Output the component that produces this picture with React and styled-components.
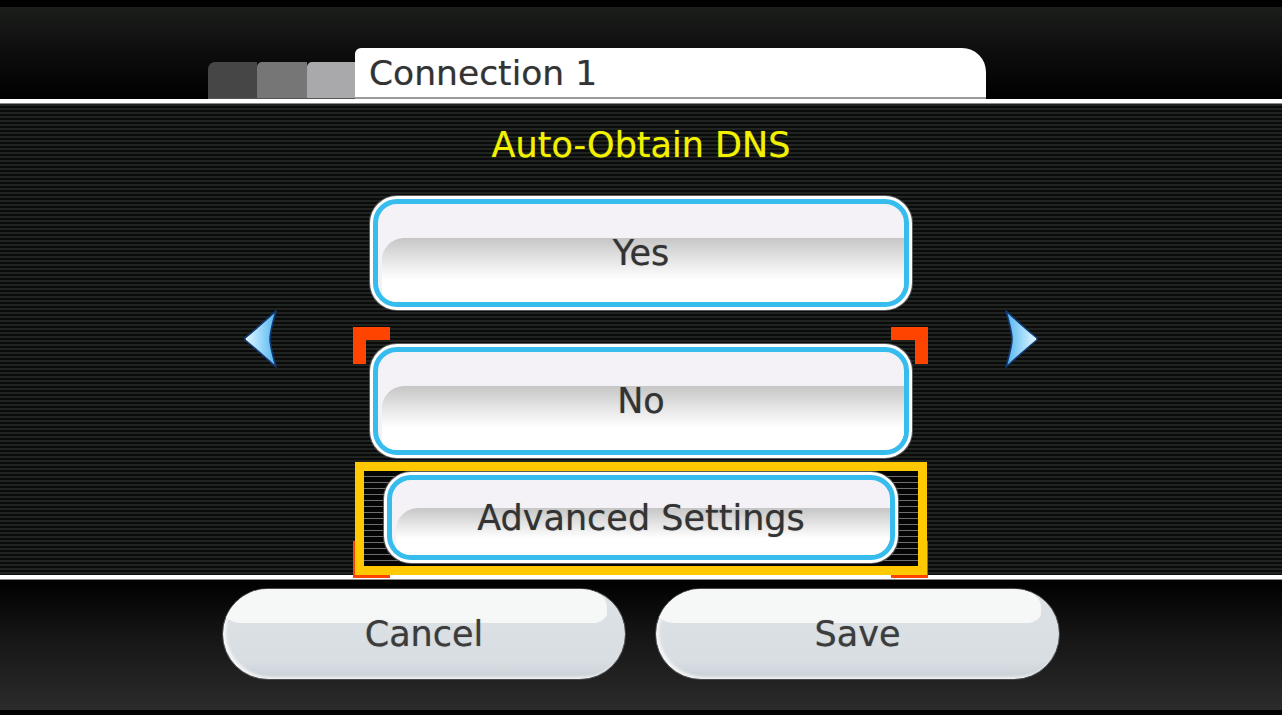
import React from "react";
import styled, { createGlobalStyle } from "styled-components";

const Global = createGlobalStyle`
  html, body { margin: 0; padding: 0; background: #000; }
  body { font-family: "DejaVu Sans", "Liberation Sans", sans-serif; }
  * { box-sizing: border-box; }
`;

const Screen = styled.div`
  width: 1282px;
  height: 715px;
  display: flex;
  flex-direction: column;
  background: #000;
  overflow: hidden;
`;

const Header = styled.header`
  height: 99px;
  display: flex;
  align-items: flex-end;
  padding-left: 208px;
  background: linear-gradient(#000 0 7px, #1c1e1c 7px, #0a0b0a 60%, #000 100%);
`;

const GreyTab = styled.div`
  width: ${(p) => p.$w}px;
  height: 37px;
  background: ${(p) => p.$shade};
  border-top-left-radius: ${(p) => (p.$first ? 7 : 5)}px;
  border-bottom: 1px solid #555;
`;

const TitleTab = styled.div`
  width: 631px;
  height: 51px;
  background: #fff;
  border-radius: 6px 24px 0 0;
  border-bottom: 2px solid #9a9a9a;
  color: #333;
  font-size: 34.5px;
  line-height: 49px;
  padding-left: 14px;
  padding-top: 1px;
  text-shadow: 0 0 1px rgba(40, 40, 40, 0.4);
`;

const Rule = styled.div`
  height: 5px;
  background: linear-gradient(#fff 0 4px, #8a8a8a 4px);
`;

const Stage = styled.main`
  height: 471px;
  display: flex;
  flex-direction: column;
  align-items: center;
  padding-top: 19px;
  background: repeating-linear-gradient(
    to bottom,
    #1f2421 0 2px,
    #0a0b0a 2px 4px
  );
`;

const Heading = styled.h1`
  margin: 0 0 29px;
  height: 44px;
  line-height: 44px;
  font-size: 35px;
  font-weight: normal;
  color: #f2f200;
  text-shadow: 0 0 1px rgba(242, 242, 0, 0.6);
`;

const Carousel = styled.div`
  display: flex;
  align-items: flex-start;
  gap: 77px;
`;

const ArrowIcon = styled.svg`
  width: 35px;
  height: 60px;
  margin-top: 113px;
  display: block;
`;

const Arrow = ({ dir }) => (
  <ArrowIcon viewBox="0 0 35 60" style={dir === "right" ? { transform: "scaleX(-1)" } : undefined}>
    <defs>
      <linearGradient id={`ag-${dir}`} x1="0" y1="0" x2="1" y2="0">
        <stop offset="0" stopColor="#e6f8ff" />
        <stop offset="0.5" stopColor="#9ad8fa" />
        <stop offset="1" stopColor="#52b4ec" />
      </linearGradient>
    </defs>
    <path
      d="M33 2 C29 16 27 24 27 30 C27 36 29 44 33 58 C23 49 12 39 2 31 L2 29 C12 21 23 11 33 2 Z"
      fill={`url(#ag-${dir})`}
      stroke="#123a78"
      strokeWidth="1.6"
      strokeLinejoin="round"
    />
  </ArrowIcon>
);

const Options = styled.div`
  position: relative;
  width: 572px;
  display: flex;
  flex-direction: column;
  align-items: center;
`;

const Cursor = styled.div`
  position: absolute;
  left: -2px;
  top: 131px;
  width: 575px;
  height: 251px;
  z-index: 1;
  pointer-events: none;
`;

const Corner = styled.div`
  position: absolute;
  width: 37px;
  height: 37px;
  border: 0 solid #ff4400;
  ${(p) => (p.$v === "top" ? "top: 0; border-top-width: 13px;" : "bottom: 0; border-bottom-width: 13px;")}
  ${(p) => (p.$h === "left" ? "left: 0; border-left-width: 13px;" : "right: 0; border-right-width: 13px;")}
`;

const OptionFrame = styled.div`
  width: ${(p) => p.$w}px;
  height: ${(p) => p.$h}px;
  margin-bottom: ${(p) => p.$mb || 0}px;
  padding: 3px;
  background: #fff;
  border-radius: 27px;
  box-shadow: 0 0 0 1px #5a5a5a;
`;

const OptionFace = styled.div`
  position: relative;
  height: 100%;
  border: 5px solid #36bdee;
  border-radius: 24px;
  background: #f4f2f6;
  overflow: hidden;
  display: flex;
  align-items: center;
  justify-content: center;
  color: #333;
  font-size: 35px;

  &::after {
    content: "";
    position: absolute;
    left: 4px;
    right: 0;
    top: ${(p) => p.$band}%;
    bottom: 0;
    border-top-left-radius: 22px;
    background: linear-gradient(#c6c6c6 0%, #e6e6e6 35%, #ffffff 65%, #ffffff 100%);
  }
`;

const Label = styled.span`
  position: relative;
  z-index: 1;
  text-shadow: 0 0 1px rgba(40, 40, 40, 0.5);
`;

const Selected = styled.div`
  position: relative;
  z-index: 2;
  width: 572px;
  height: 113px;
  border: 9px solid #ffc800;
  padding: 1px 0 3px;
  display: flex;
  justify-content: center;
  background: repeating-linear-gradient(to bottom, #050505 0 5px, #6e6e6e 5px 6px);
`;

const Footer = styled.footer`
  height: 130px;
  display: flex;
  justify-content: center;
  gap: 29px;
  padding-top: 8px;
  background: linear-gradient(#000 0%, #141414 40%, #2b2b2b 100%);
`;

const Pill = styled.button`
  position: relative;
  width: ${(p) => p.$w}px;
  height: 92px;
  border: 1px solid #4a4a4a;
  border-radius: 46px;
  padding: 0;
  background: linear-gradient(#dde2e6, #d9dee3 80%, #c9d0d6);
  box-shadow: inset 3px -2px 3px rgba(255, 255, 255, 0.75);
  overflow: hidden;
  font-family: "DejaVu Sans", sans-serif;
  font-size: 35px;
  color: #3c3c3c;
  cursor: pointer;

  &::before {
    content: "";
    position: absolute;
    top: 0;
    left: 0;
    right: 18px;
    height: 38%;
    background: #f5f8f7;
    border-radius: 46px 40px 26px 30px / 34px 30px 16px 22px;
  }
`;

const PillLabel = styled.span`
  position: relative;
  text-shadow: 0 0 1px rgba(40, 40, 40, 0.5);
`;

const BottomEdge = styled.div`
  height: 5px;
  background: #000;
`;

export default function App() {
  return (
    <>
      <Global />
      <Screen>
        <Header>
          <GreyTab $w={49} $shade="#454645" $first />
          <GreyTab $w={50} $shade="#777677" />
          <GreyTab $w={48} $shade="#a9a8aa" />
          <TitleTab>Connection 1</TitleTab>
        </Header>
        <Rule />
        <Stage>
          <Heading>Auto-Obtain DNS</Heading>
          <Carousel>
            <Arrow dir="left" />
            <Options>
              <Cursor>
                <Corner $v="top" $h="left" />
                <Corner $v="top" $h="right" />
                <Corner $v="bottom" $h="left" />
                <Corner $v="bottom" $h="right" />
              </Cursor>
              <OptionFrame $w={542} $h={114} $mb={34}>
                <OptionFace $band={35}>
                  <Label>Yes</Label>
                </OptionFace>
              </OptionFrame>
              <OptionFrame $w={542} $h={114} $mb={4}>
                <OptionFace $band={35}>
                  <Label>No</Label>
                </OptionFace>
              </OptionFrame>
              <Selected>
                <OptionFrame $w={514} $h={91}>
                  <OptionFace $band={37}>
                    <Label>Advanced Settings</Label>
                  </OptionFace>
                </OptionFrame>
              </Selected>
            </Options>
            <Arrow dir="right" />
          </Carousel>
        </Stage>
        <Rule />
        <Footer>
          <Pill $w={404}>
            <PillLabel>Cancel</PillLabel>
          </Pill>
          <Pill $w={405}>
            <PillLabel>Save</PillLabel>
          </Pill>
        </Footer>
        <BottomEdge />
      </Screen>
    </>
  );
}
